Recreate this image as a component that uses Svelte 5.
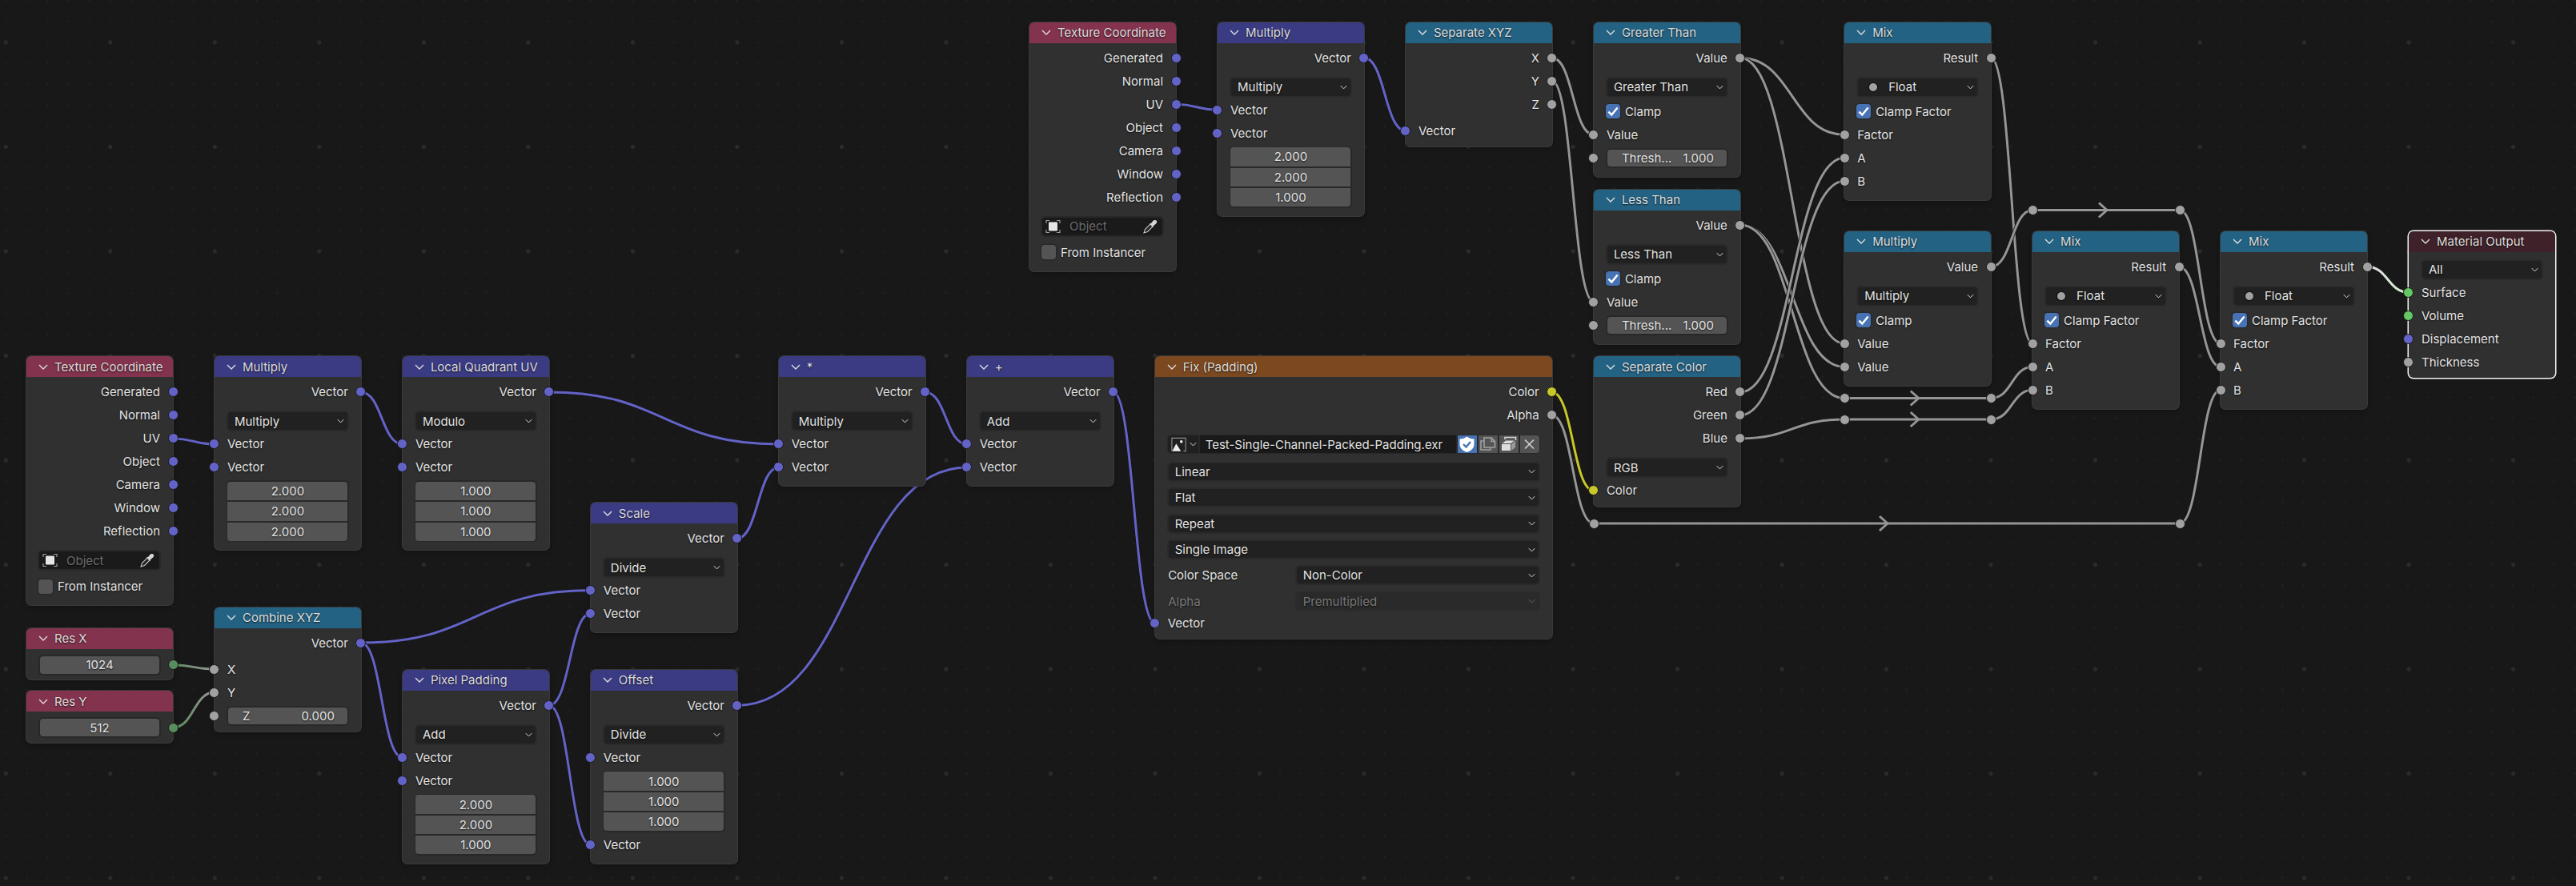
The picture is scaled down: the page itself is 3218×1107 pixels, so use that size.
<script>
    import { onMount } from "svelte";

    // blender snaps nodes to the grid, so positions are given in grid cells
    const at = (i, j) => ({ x: 33 + i * 26.105, y: 27.8 + j * 26.1 });

    const out = (label, sock = "V", key = label) => ({ t: "row", side: "out", label, sock, key });
    const inp = (label, sock = "V", key = label) => ({ t: "row", side: "in", label, sock, key });
    const drop = (label, dot = false) => ({ t: "drop", label, dot });
    const check = (label, on = true) => ({ t: "check", label, on });
    const vec = (a, b, c) => ({ t: "vec", vals: [a, b, c] });

    const texCoord = [
        out("Generated"),
        out("Normal"),
        out("UV"),
        out("Object"),
        out("Camera"),
        out("Window"),
        out("Reflection"),
        { t: "object" },
        { t: "check", label: "From Instancer", on: false, after: true },
    ];
    const vecMath = (op, vals) => [out("Vector"), drop(op), inp("Vector", "V", "a"), inp("Vector", "V", "b"), vec(...vals)];
    const compare = (op) => [
        out("Value", "F"),
        drop(op),
        check("Clamp"),
        inp("Value", "F", "v"),
        { t: "num", label: "Thresh...", val: "1.000", sock: "F", key: "t" },
    ];
    const mix = () => [
        out("Result", "F"),
        drop("Float", true),
        check("Clamp Factor"),
        inp("Factor", "F"),
        inp("A", "F"),
        inp("B", "F"),
    ];

    const nodes = [
        { id: "tc1", title: "Texture Coordinate", kind: "input", ...at(48, 0), items: texCoord },
        { id: "mul1", title: "Multiply", kind: "vector", ...at(57, 0), items: vecMath("Multiply", ["2.000", "2.000", "1.000"]) },
        {
            id: "sep", title: "Separate XYZ", kind: "conv", ...at(66, 0), tight: true,
            items: [out("X", "F"), out("Y", "F"), out("Z", "F"), { ...inp("Vector"), gap: true }],
        },
        { id: "gt", title: "Greater Than", kind: "conv", ...at(75, 0), items: compare("Greater Than") },
        { id: "lt", title: "Less Than", kind: "conv", ...at(75, 8), items: compare("Less Than") },
        {
            id: "sc", title: "Separate Color", kind: "conv", ...at(75, 16), tight: true,
            items: [out("Red", "F"), out("Green", "F"), out("Blue", "F"), drop("RGB"), inp("Color", "C")],
        },
        { id: "mix1", title: "Mix", kind: "conv", ...at(87, 0), items: mix() },
        {
            id: "mm", title: "Multiply", kind: "conv", ...at(87, 10),
            items: [out("Value", "F"), drop("Multiply"), check("Clamp"), inp("Value", "F", "a"), inp("Value", "F", "b")],
        },
        { id: "mix2", title: "Mix", kind: "conv", ...at(96, 10), items: mix() },
        { id: "mix3", title: "Mix", kind: "conv", ...at(105, 10), items: mix() },
        {
            id: "mat", title: "Material Output", kind: "output", ...at(114, 10), tight: true, selected: true,
            items: [drop("All"), inp("Surface", "S"), inp("Volume", "S"), inp("Displacement"), inp("Thickness", "F")],
        },
        { id: "tc2", title: "Texture Coordinate", kind: "input", ...at(0, 16), items: texCoord },
        { id: "mul2", title: "Multiply", kind: "vector", ...at(9, 16), items: vecMath("Multiply", ["2.000", "2.000", "2.000"]) },
        { id: "lq", title: "Local Quadrant UV", kind: "vector", ...at(18, 16), items: vecMath("Modulo", ["1.000", "1.000", "1.000"]) },
        {
            id: "star", title: "*", kind: "vector", ...at(36, 16),
            items: [out("Vector"), drop("Multiply"), inp("Vector", "V", "a"), inp("Vector", "V", "b")],
        },
        {
            id: "plus", title: "+", kind: "vector", ...at(45, 16),
            items: [out("Vector"), drop("Add"), inp("Vector", "V", "a"), inp("Vector", "V", "b")],
        },
        {
            id: "scale", title: "Scale", kind: "vector", ...at(27, 23),
            items: [out("Vector"), drop("Divide"), inp("Vector", "V", "a"), inp("Vector", "V", "b")],
        },
        {
            id: "combine", title: "Combine XYZ", kind: "conv", ...at(9, 28), tight: true,
            items: [out("Vector"), { ...inp("X", "F"), gap: true }, inp("Y", "F"), { t: "num", label: "Z", val: "0.000", sock: "F", key: "Z" }],
        },
        { id: "resx", title: "Res X", kind: "input", ...at(0, 29), tight: true, items: [{ t: "value", val: "1024" }] },
        { id: "resy", title: "Res Y", kind: "input", ...at(0, 32), tight: true, items: [{ t: "value", val: "512" }] },
        { id: "pix", title: "Pixel Padding", kind: "vector", ...at(18, 31), items: vecMath("Add", ["2.000", "2.000", "1.000"]) },
        {
            id: "off", title: "Offset", kind: "vector", ...at(27, 31),
            items: [out("Vector"), drop("Divide"), inp("Vector", "V", "a"), vec("1.000", "1.000", "1.000"), inp("Vector", "V", "b")],
        },
        {
            id: "fix", title: "Fix (Padding)", kind: "texture", ...at(54, 16), w: 496, tight: true,
            items: [
                out("Color", "C"),
                out("Alpha", "F"),
                { t: "image", name: "Test-Single-Channel-Packed-Padding.exr" },
                { t: "wide", label: "Linear" },
                { t: "wide", label: "Flat" },
                { t: "wide", label: "Repeat" },
                { t: "wide", label: "Single Image" },
                { t: "wide", label: "Non-Color", name: "Color Space" },
                { t: "wide", label: "Premultiplied", name: "Alpha", off: true },
                inp("Vector"),
            ],
        },
    ];

    const reroutes = [
        { id: "ra1", x: 2304, y: 497.5 },
        { id: "ra2", x: 2487.5, y: 497.5 },
        { id: "rb1", x: 2304, y: 524 },
        { id: "rb2", x: 2487.5, y: 524 },
        { id: "rc1", x: 1991, y: 654 },
        { id: "rc2", x: 2723, y: 654 },
        { id: "rd1", x: 2539, y: 262.5 },
        { id: "rd2", x: 2723, y: 262.5 },
    ];

    const colors = { V: "#6363c7", F: "#a1a1a1", S: "#63c763", C: "#c7c729", I: "#598c5c" };
    const { V, C, I } = colors;
    // float wires read a little darker than the float sockets
    const F = "#959595";

    const links = [
        ["tc2.UV", "mul2.a", V], ["mul2.Vector", "lq.a", V], ["lq.Vector", "star.a", V],
        ["star.Vector", "plus.a", V], ["plus.Vector", "fix.Vector", V],
        ["resx.out", "combine.X", I, F], ["resy.out", "combine.Y", I, F],
        ["combine.Vector", "scale.a", V], ["combine.Vector", "pix.a", V],
        ["pix.Vector", "scale.b", V], ["pix.Vector", "off.b", V],
        ["scale.Vector", "star.b", V], ["off.Vector", "plus.b", V],
        ["tc1.UV", "mul1.a", V], ["mul1.Vector", "sep.Vector", V],
        ["sep.X", "gt.v", F], ["sep.Y", "lt.v", F],
        ["gt.Value", "mix1.Factor", F], ["gt.Value", "mm.a", F],
        ["lt.Value", "mm.b", F], ["lt.Value", "ra1", F],
        ["sc.Red", "mix1.A", F], ["sc.Green", "mix1.B", F], ["sc.Blue", "rb1", F],
        ["mix1.Result", "mix2.Factor", F], ["mm.Value", "rd1", F],
        ["ra1", "ra2", F, F, true], ["rb1", "rb2", F, F, true],
        ["ra2", "mix2.A", F], ["rb2", "mix2.B", F],
        ["rd1", "rd2", F, F, true], ["rd2", "mix3.Factor", F],
        ["mix2.Result", "mix3.A", F],
        ["fix.Color", "sc.Color", C], ["fix.Alpha", "rc1", F],
        ["rc1", "rc2", F, F, true], ["rc2", "mix3.B", F],
        ["mix3.Result", "mat.Surface", "#dcdcdc", "#cfeccf"],
    ];

    let wires = $state([]);

    // wires are worked out from where the sockets ended up in the layout
    onMount(() => {
        const pos = {};
        for (const el of document.querySelectorAll("[data-s]")) {
            const r = el.getBoundingClientRect();
            pos[el.dataset.s] = { x: r.left + r.width / 2, y: r.top + r.height / 2 };
        }
        wires = links.map(([from, to, c1, c2 = c1, arrow = false], i) => {
            const a = pos[from];
            const b = pos[to];
            const h = Math.abs(b.x - a.x) * 0.5;
            return {
                id: "w" + i, a, b, c1, c2, arrow,
                d: `M${a.x} ${a.y} C${a.x + h} ${a.y} ${b.x - h} ${b.y} ${b.x} ${b.y}`,
                mx: (a.x + b.x) / 2,
            };
        });
    });
</script>

{#snippet socket(nodeId, key, kind, side)}
    <span class="socket {side}" data-s="{nodeId}.{key}" style="background:{colors[kind]}"></span>
{/snippet}

{#snippet arrowDown(cls)}
    <svg class={cls} viewBox="0 0 12 7"><polyline points="1,1 6,6 11,1" /></svg>
{/snippet}

<div class="canvas">
    <svg class="wires" width="3218" height="1107">
        <defs>
            {#each wires as w}
                {#if w.c1 !== w.c2}
                    <linearGradient id={w.id} gradientUnits="userSpaceOnUse" x1={w.a.x} y1={w.a.y} x2={w.b.x} y2={w.b.y}>
                        <stop offset="0" stop-color={w.c1} />
                        <stop offset="1" stop-color={w.c2} />
                    </linearGradient>
                {/if}
            {/each}
        </defs>
        {#each wires as w}
            <path d={w.d} class="edge" />
            <path d={w.d} class="wire" stroke={w.c1 !== w.c2 ? `url(#${w.id})` : w.c1} />
            {#if w.arrow}
                <polyline
                    class="wire"
                    stroke={w.c1}
                    points="{w.mx - 9},{w.a.y - 9} {w.mx + 1},{w.a.y} {w.mx - 9},{w.a.y + 9}"
                />
            {/if}
        {/each}
    </svg>

    {#each nodes as n}
        <section
            class="node {n.kind}"
            class:tight={n.tight}
            class:selected={n.selected}
            style="left:{n.x}px;top:{n.y}px;width:{n.w ?? 183}px"
        >
            <header>
                {@render arrowDown("head-chev")}
                <span>{n.title}</span>
            </header>
            <div class="body">
                {#each n.items as it}
                    {#if it.t === "row"}
                        <div class="row {it.side}" class:gap={it.gap}>
                            <span>{it.label}</span>
                            {@render socket(n.id, it.key, it.sock, it.side)}
                        </div>
                    {:else if it.t === "drop"}
                        <div class="drop">
                            {#if it.dot}<i class="type-dot"></i>{/if}
                            <span>{it.label}</span>
                            {@render arrowDown("chev")}
                        </div>
                    {:else if it.t === "check"}
                        <div class="check-row" class:after={it.after}>
                            <span class="box" class:on={it.on}>
                                {#if it.on}
                                    <svg viewBox="0 0 16 16"><polyline points="3,8.5 6.5,12 13,4" /></svg>
                                {/if}
                            </span>
                            <span>{it.label}</span>
                        </div>
                    {:else if it.t === "vec"}
                        <div class="vec">
                            {#each it.vals as v}<div>{v}</div>{/each}
                        </div>
                    {:else if it.t === "num"}
                        <div class="row in num-row">
                            {@render socket(n.id, it.key, it.sock, "in")}
                            <div class="num"><span>{it.label}</span><span>{it.val}</span></div>
                        </div>
                    {:else if it.t === "value"}
                        <div class="value-row">
                            <div class="value">{it.val}</div>
                            {@render socket(n.id, "out", "I", "out")}
                        </div>
                    {:else if it.t === "object"}
                        <div class="object">
                            <svg class="obj-icon" viewBox="0 0 19 18">
                                <path class="corners" d="M1 5V1.5H5M14 1.5H18V5M18 13V16.5H14M5 16.5H1V13" />
                                <rect x="4" y="3.5" width="11" height="11" rx="1" />
                            </svg>
                            <span>Object</span>
                            <svg class="dropper" viewBox="0 0 18 18">
                                <path class="tube" d="M1 17L2.5 12.5L9 6L12 9L5.5 15.5Z" />
                                <path class="bulb" d="M8 5L10 5L12 2.5C13.5 .7 15.5 .7 16.6 1.6C17.6 2.8 17.4 4.6 15.6 6L13 8L13 10Z" />
                            </svg>
                        </div>
                    {:else if it.t === "image"}
                        <div class="image">
                            <div class="img-pick">
                                <svg viewBox="0 0 22 20" class="img-icon">
                                    <path class="frame" d="M1 19V1H20V19H17" />
                                    <path class="fill" d="M1.5 19L7 8.5L13.5 19Z" />
                                    <circle class="fill" cx="14" cy="6" r="2" />
                                </svg>
                                {@render arrowDown("chev small")}
                            </div>
                            <div class="img-name">{it.name}</div>
                            <button class="tool fake">
                                <svg viewBox="0 0 23 22">
                                    <path fill="#fff" d="M11.5 1.5C14 3.5 17 4.5 20.5 4.5V11C20.5 16 16.5 19.5 11.5 21C6.5 19.5 2.5 16 2.5 11V4.5C6 4.5 9 3.5 11.5 1.5Z" />
                                    <polyline points="7,11 10.5,14.5 16,8" fill="none" stroke="#4772b3" stroke-width="2.4" />
                                </svg>
                            </button>
                            <button class="tool">
                                <svg viewBox="0 0 23 22">
                                    <path class="dim" d="M7 7H3V18H15V15" />
                                    <path class="dim" d="M7 15V3H16L20.5 7.5V15H7ZM16 3V7.5H20.5" />
                                </svg>
                            </button>
                            <button class="tool">
                                <svg viewBox="0 0 23 22">
                                    <path fill="#ddd" d="M3 11H14V19H3Z" />
                                    <path fill="#999" d="M15 11L20 6.5V15L15 19Z" />
                                    <path fill="#ddd" d="M3.8 10L8 6.5H18.5L14.5 10Z" />
                                    <path class="dim bright" d="M7 5V2.5H20.5V6" />
                                </svg>
                            </button>
                            <button class="tool">
                                <svg viewBox="0 0 23 22"><path class="dim bright" d="M6 5.5L17 16.5M17 5.5L6 16.5" /></svg>
                            </button>
                        </div>
                    {:else if it.t === "wide"}
                        <div class="wide-row" class:off={it.off} class:named={it.name}>
                            {#if it.name}<label>{it.name}</label>{/if}
                            <div class="wide">
                                <span>{it.label}</span>
                                {@render arrowDown("chev")}
                            </div>
                        </div>
                    {/if}
                {/each}
            </div>
        </section>
    {/each}

    {#each reroutes as r}
        <span class="reroute" data-s={r.id} style="left:{r.x}px;top:{r.y}px"></span>
    {/each}
</div>

<style>
    :global(body) {
        background: #181818;
    }

    .canvas {
        position: relative;
        width: 3218px;
        height: 1107px;
        overflow: hidden;
        background-color: #181818;
        background-image: radial-gradient(circle, #2b2b2b 2.2px, transparent 2.9px),
            radial-gradient(circle, #212121 0.9px, transparent 1.5px);
        background-size: 130.53px 130.5px, 26.106px 26.1px;
        background-position: -57.97px -12.27px, -5.75px 39.95px;
        font-family: "Inter", "Noto Sans", sans-serif;
        font-size: 15px;
        color: #e4e4e4;
    }

    .wires {
        position: absolute;
        left: 0;
        top: 0;
    }

    .wires path,
    .wires polyline {
        fill: none;
    }

    .edge {
        stroke: #161616;
        stroke-width: 4.5;
    }

    .wire {
        stroke-width: 3;
    }

    .node {
        position: absolute;
        border-radius: 6px;
        background: #303030;
        box-shadow: 0 0 0 1px #3a3a3a, 0 2px 6px rgba(0, 0, 0, 0.35);
        text-shadow: 0 1px 2px rgba(0, 0, 0, 0.75);
    }

    .node.selected {
        box-shadow: 0 0 0 1.5px #f4f4f4;
    }

    header {
        height: 26px;
        display: flex;
        align-items: center;
        gap: 8px;
        padding-left: 15px;
        border-radius: 6px 6px 0 0;
        color: #dcdcdc;
    }

    .input header {
        background: #83334d;
    }

    .vector header {
        background: #3b3b84;
    }

    .conv header {
        background: #246283;
    }

    .texture header {
        background: #7b481f;
    }

    .output header {
        background: #3f2229;
    }

    .head-chev {
        width: 12px;
        height: 7px;
        flex: none;
    }

    .head-chev polyline,
    .chev polyline {
        fill: none;
        stroke: #e0e0e0;
        stroke-width: 1.3;
    }

    .body {
        padding: 4px 0 9px;
    }

    .tight .body {
        padding-bottom: 5.5px;
    }

    .row {
        position: relative;
        height: 29px;
        display: flex;
        align-items: center;
        padding: 0 16px;
    }

    .row.out {
        justify-content: flex-end;
    }

    .row.gap {
        margin-top: 4px;
    }

    .socket {
        position: absolute;
        top: 50%;
        width: 11px;
        height: 11px;
        margin-top: -6.5px;
        border-radius: 50%;
        border: 1px solid #1a1a1a;
        z-index: 2;
    }

    .socket.out {
        right: -6.5px;
    }

    .socket.in {
        left: -6.5px;
    }

    .drop {
        height: 26px;
        margin: 9px 15px 1px;
        box-sizing: border-box;
        display: flex;
        align-items: center;
        padding: 0 4px 0 8px;
        border: 2px solid #2a2a2a;
        border-radius: 6px;
        background: #212121;
    }

    .body > .drop:first-child {
        margin-top: 5px;
    }

    .chev {
        width: 9px;
        height: 6px;
        margin-left: auto;
        flex: none;
    }

    .chev.small {
        margin-left: 3px;
    }

    .type-dot {
        width: 10px;
        height: 10px;
        margin: 0 14px 0 6px;
        border-radius: 50%;
        background: #a1a1a1;
        box-shadow: 0 0 0 1.5px #161616;
    }

    .check-row {
        height: 29px;
        margin-top: 3px;
        padding-left: 15px;
        display: flex;
        align-items: center;
        gap: 6px;
    }

    .check-row.after {
        margin-top: 5px;
    }

    .box {
        box-sizing: border-box;
        width: 18px;
        height: 18px;
        border-radius: 4px;
        background: #545454;
        box-shadow: 0 0 0 1.5px #282828;
        display: flex;
    }

    .box.on {
        background: #4772b3;
    }

    .box svg {
        width: 100%;
    }

    .box polyline {
        fill: none;
        stroke: #fff;
        stroke-width: 2.2;
    }

    .vec {
        height: 77px;
        margin: 2px 15px 1px;
        box-sizing: border-box;
        padding: 1.5px;
        display: flex;
        flex-direction: column;
        gap: 2px;
        border-radius: 5px;
        background: #282828;
    }

    .vec div {
        flex: 1;
        display: flex;
        align-items: center;
        justify-content: center;
        background: #545454;
    }

    .vec div:first-child {
        border-radius: 4px 4px 0 0;
    }

    .vec div:last-child {
        border-radius: 0 0 4px 4px;
    }

    .num-row {
        padding: 0 15px;
    }

    .num,
    .value {
        flex: 1;
        height: 25px;
        box-sizing: border-box;
        border: 2px solid #282828;
        border-radius: 6px;
        background: #545454;
        display: flex;
        align-items: center;
    }

    .num {
        justify-content: space-between;
        padding: 0 16px 0 18px;
    }

    .value-row {
        position: relative;
        height: 26px;
        margin: 3px 15px 0;
        display: flex;
    }

    .value {
        height: 26px;
        justify-content: center;
    }

    .value-row .socket.out {
        right: -21.5px;
    }

    .object {
        height: 26px;
        margin: 9px 15px 0 14px;
        box-sizing: border-box;
        padding: 0 6px 0 4px;
        display: flex;
        align-items: center;
        border: 2px solid #282828;
        border-radius: 6px;
        background: #1a1a1a;
        color: #6c6c6c;
    }

    .obj-icon {
        width: 19px;
        height: 18px;
        margin-right: 11px;
    }

    .corners {
        fill: none;
        stroke: #9a9a9a;
        stroke-width: 1.2;
    }

    .obj-icon rect {
        fill: #e6e6e6;
    }

    .dropper {
        width: 18px;
        height: 18px;
        margin-left: auto;
    }

    .tube {
        fill: #222;
        stroke: #c8c8c8;
        stroke-width: 1.1;
    }

    .bulb {
        fill: #d6d6d6;
    }

    .image {
        height: 24px;
        margin: 10px 15px 0;
        box-sizing: border-box;
        padding: 1px;
        display: flex;
        gap: 2px;
        border-radius: 6px;
        background: #282828;
    }

    .img-pick {
        width: 38px;
        display: flex;
        align-items: center;
        padding-left: 4px;
        box-sizing: border-box;
        background: #202020;
        border-radius: 4px 0 0 4px;
    }

    .img-icon {
        width: 20px;
        height: 19px;
        flex: none;
    }

    .frame {
        fill: none;
        stroke: #8c8c8c;
        stroke-width: 1.3;
    }

    .fill {
        fill: #eee;
    }

    .img-name {
        flex: 1;
        display: flex;
        align-items: center;
        padding-left: 7px;
        background: #1a1a1a;
    }

    .tool {
        width: 24px;
        padding: 0;
        border: 0;
        background: #545454;
    }

    .tool:last-child {
        border-radius: 0 4px 4px 0;
    }

    .tool.fake {
        background: #4772b3;
    }

    .tool svg {
        display: block;
        width: 23px;
        height: 22px;
    }

    .dim {
        fill: none;
        stroke: #a0a0a0;
        stroke-width: 1.6;
    }

    .dim.bright {
        stroke: #d4d4d4;
    }

    .wide-row {
        margin: 7.4px 15px 0;
    }

    .image + .wide-row {
        margin-top: 9.5px;
    }

    .wide-row.named {
        display: flex;
        align-items: center;
    }

    .wide-row label {
        width: 160px;
        flex: none;
        padding-left: 1.5px;
        box-sizing: border-box;
    }

    .wide {
        flex: 1;
        height: 25px;
        box-sizing: border-box;
        display: flex;
        align-items: center;
        padding: 0 4px 0 8px;
        border: 2px solid #2a2a2a;
        border-radius: 6px;
        background: #212121;
    }

    .wide-row.off {
        color: #787878;
    }

    .wide-row.off .wide {
        background: #2a2a2a;
        border-color: #2b2b2b;
    }

    .wide-row.off .chev polyline {
        stroke: #666;
    }

    .reroute {
        position: absolute;
        width: 11px;
        height: 11px;
        margin: -6.5px 0 0 -6.5px;
        border-radius: 50%;
        border: 1px solid #1a1a1a;
        background: #a1a1a1;
        z-index: 2;
    }
</style>
